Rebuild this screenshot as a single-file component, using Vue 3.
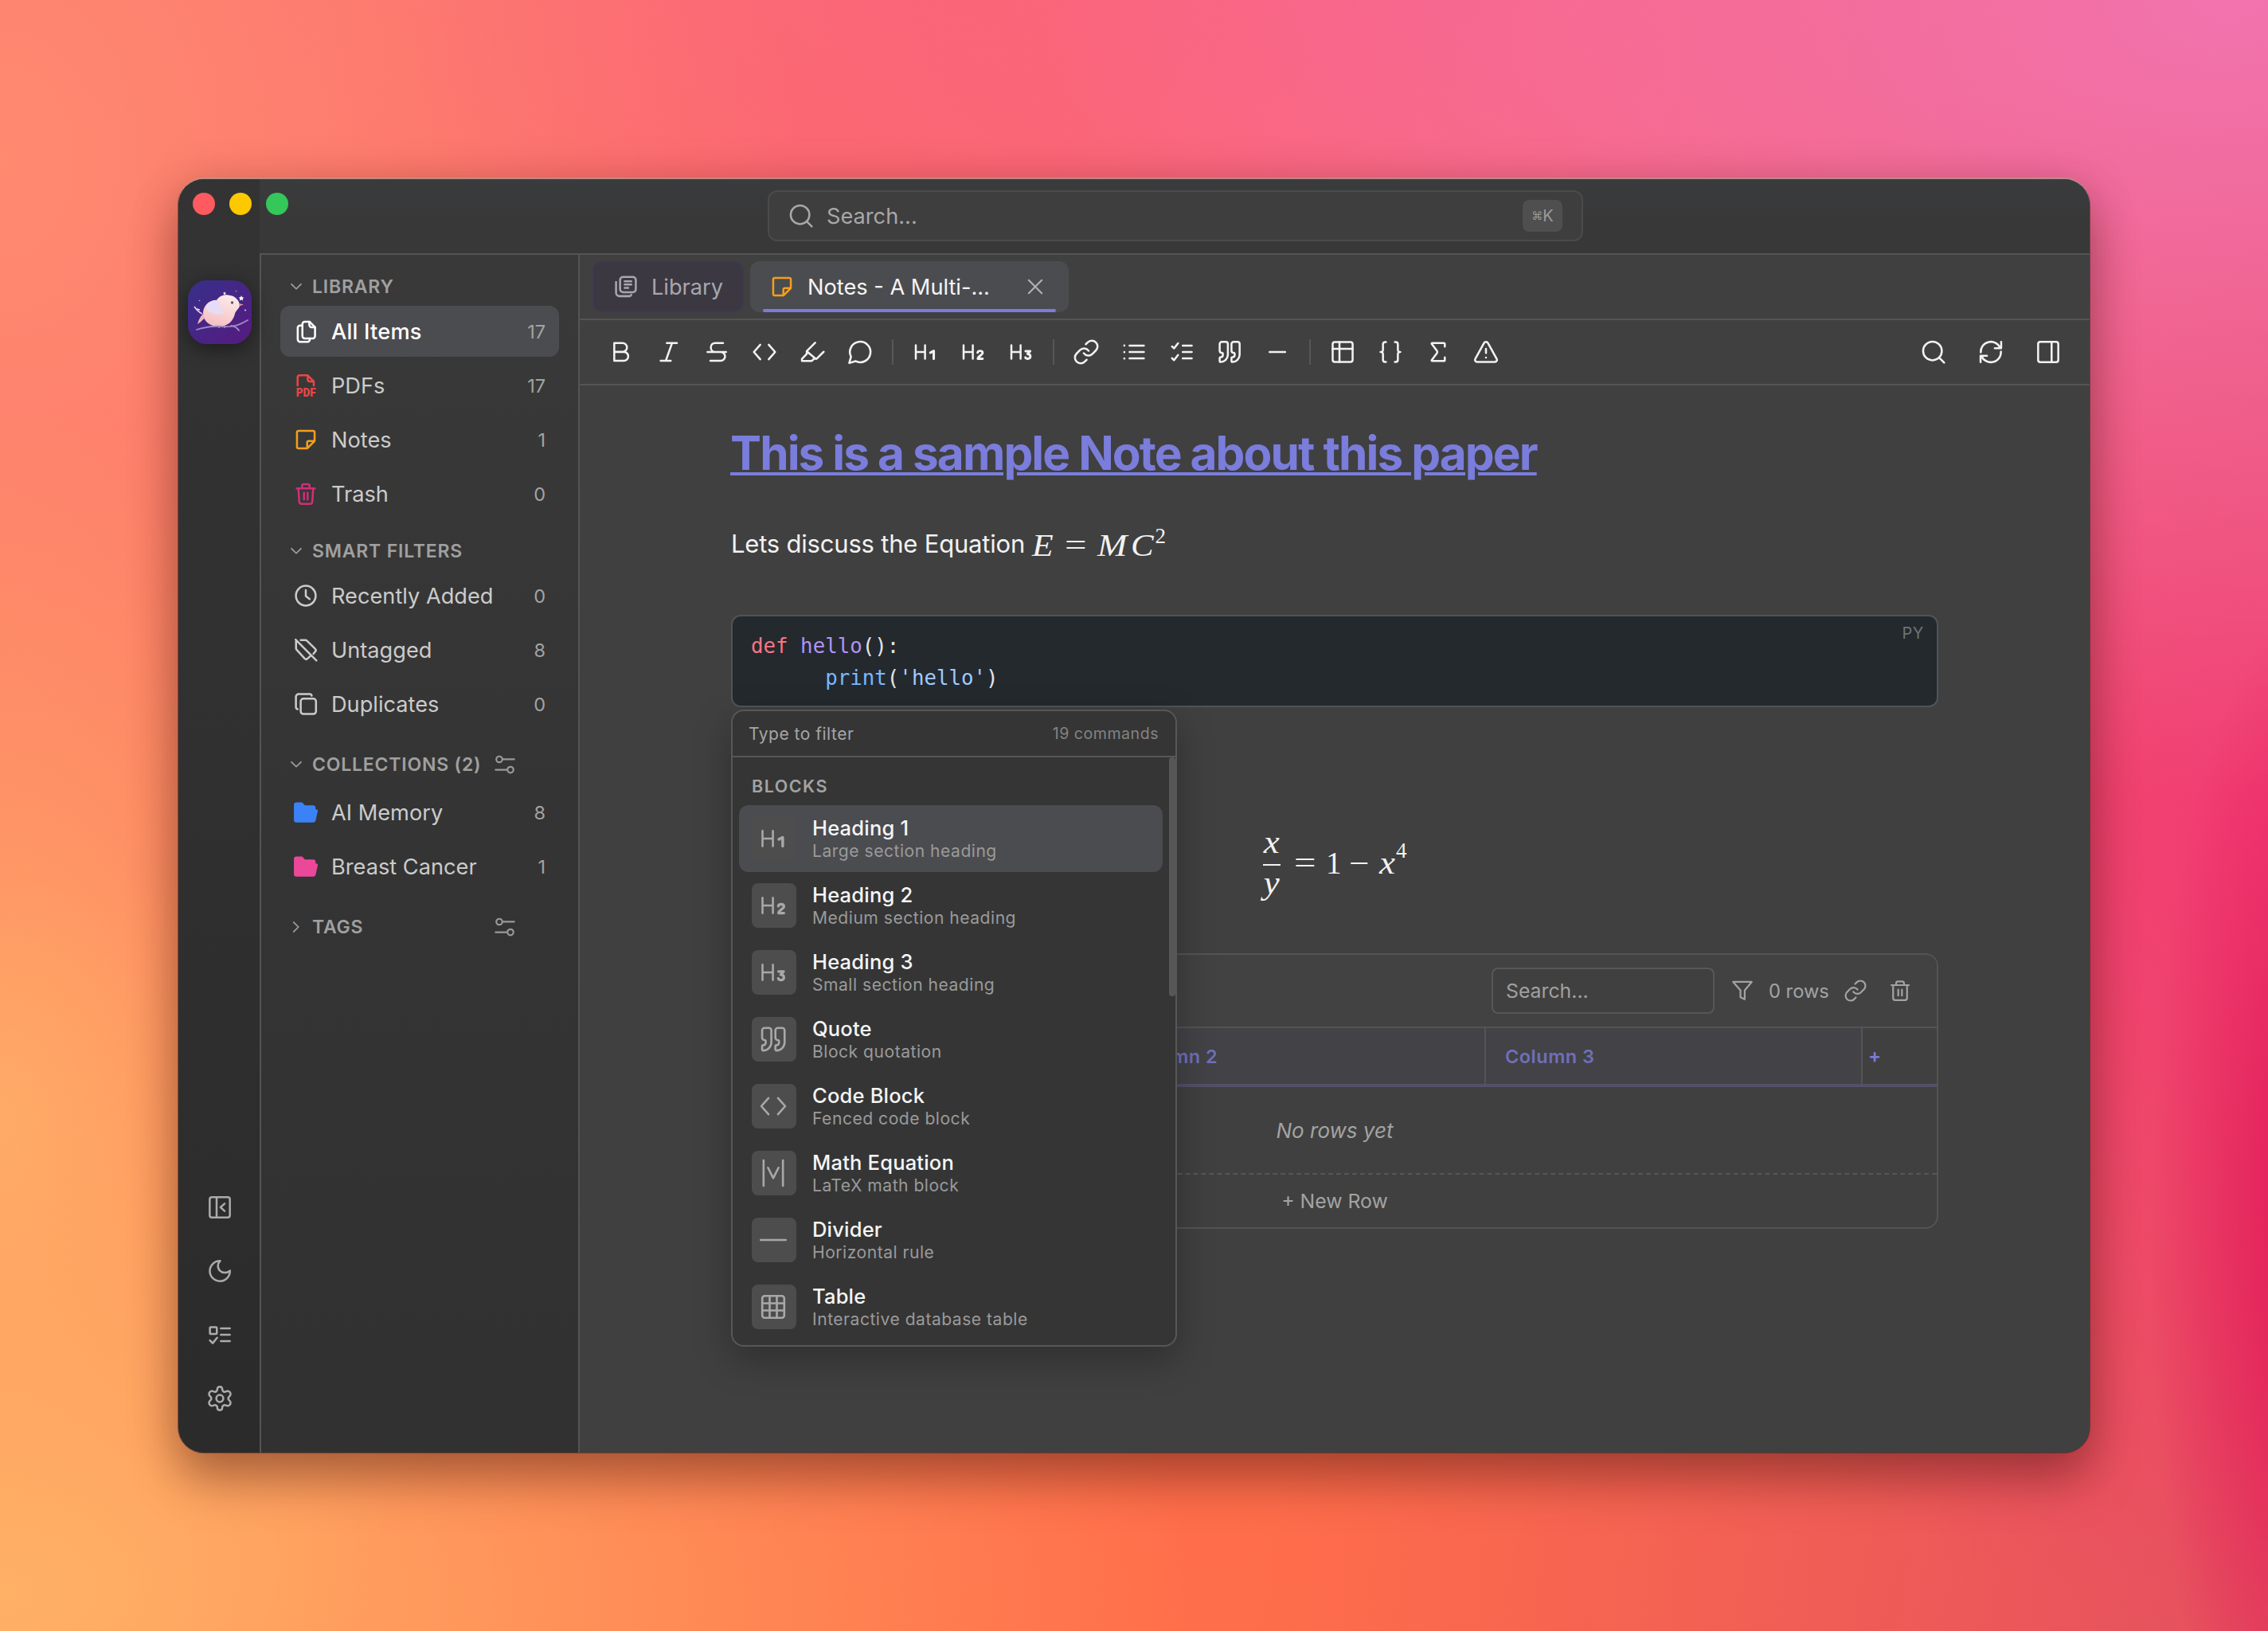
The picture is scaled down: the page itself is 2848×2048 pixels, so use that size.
<template>
  <div class="desktop">
    <div class="window">
      <aside class="rail">
        <div class="lights">
          <span class="light red"></span>
          <span class="light yellow"></span>
          <span class="light green"></span>
        </div>
        <div class="logo">
          <svg viewBox="0 0 80 80">
            <defs>
              <linearGradient id="night" x1="0" y1="0" x2="1" y2="1">
                <stop offset="0" stop-color="#36308a" />
                <stop offset="1" stop-color="#571a80" />
              </linearGradient>
              <linearGradient id="bird" x1="0.7" y1="0" x2="0.3" y2="1">
                <stop offset="0" stop-color="#fbeaea" />
                <stop offset="1" stop-color="#f5bfc0" />
              </linearGradient>
            </defs>
            <rect width="80" height="80" fill="url(#night)" />
            <path d="M8 33q5 7 10 9M11 36l4 1" fill="none" stroke="#e5d6ef" stroke-width="1.6" />
            <path d="M19 42q-5 5-7 13 6-4 9-8z" fill="#f0b6bd" />
            <path d="M19 41C19 31 28 24 36 25c3-5 10-8 17-6 7 1 12 7 12 13-1 4-5 6-6 10-2 9-9 16-20 16-12 0-20-7-20-17z" fill="url(#bird)" />
            <path d="M23 33c3-5 8-9 13-8 5 1 6 6 5 10 2 2 3 4 4 7-6 0-9 2-14-1-5-1-9-4-8-8z" fill="#e6dcf5" />
            <path d="M64 29l6 1.6-6 2z" fill="#e99aa0" />
            <circle cx="55.5" cy="28" r="1.7" fill="#5a5560" />
            <path d="M39 57v3M46 57v3" stroke="#e99aa0" stroke-width="1.2" />
            <path d="M11 62c12-4 20-5 32-4 14 1 22-2 32-8M54 57q7 1 10 6" fill="none" stroke="#a489c4" stroke-width="1.8" stroke-linecap="round" />
            <path d="M67 19l1 2.2 2.4.3-1.7 1.6.4 2.4-2.1-1.2-2.1 1.2.4-2.4-1.7-1.6 2.4-.3z" fill="#fff" />
            <path d="M46 14.3l.7 1.3 1.3.2-1 1 .3 1.4-1.3-.7-1.3.7.3-1.4-1-1 1.3-.2z" fill="#f3e9f8" />
            <circle cx="14.5" cy="25.5" r="0.8" fill="#cbbbe6" />
            <circle cx="72" cy="37.5" r="1" fill="#e2d4f2" />
            <circle cx="60.5" cy="13.5" r="0.7" fill="#cbbbe6" />
          </svg>
        </div>
        <div class="rail-actions">
          <Icon v-for="name in railIcons" :key="name" :name="name" />
        </div>
      </aside>

      <div class="body">
        <header class="titlebar">
          <div class="search">
            <Icon name="search" />
            <span class="search-text">Search...</span>
            <kbd><span class="cmd">⌘</span>K</kbd>
          </div>
        </header>

        <div class="panes">
          <nav class="sidebar">
            <section v-for="group in groups" :key="group.title" class="group">
              <div :class="['group-head', { tall: group.manage }]">
                <Icon :name="group.open ? 'down' : 'right'" class="chevron" />
                <span>{{ group.title }}</span>
                <Icon v-if="group.manage" name="sliders" class="manage" />
              </div>
              <div
                v-for="item in group.items"
                :key="item.label"
                :class="['item', { active: item.active }]"
              >
                <Icon :name="item.icon" :class="item.tone" />
                <span class="label">{{ item.label }}</span>
                <span class="count">{{ item.count }}</span>
              </div>
            </section>
          </nav>

          <main class="main">
            <div class="tabs">
              <div class="tab library">
                <Icon name="library" />
                <span>Library</span>
              </div>
              <div class="tab current">
                <Icon name="note" class="amber" />
                <span class="tab-title">Notes - A Multi-...</span>
                <Icon name="close" class="close" />
              </div>
            </div>

            <div class="toolbar">
              <template v-for="(tool, index) in tools" :key="index">
                <span v-if="tool === '|'" class="divider"></span>
                <button v-else class="tool"><Icon :name="tool" /></button>
              </template>
              <div class="tools-right">
                <button v-for="tool in rightTools" :key="tool" class="tool">
                  <Icon :name="tool" />
                </button>
              </div>
            </div>

            <article class="editor">
              <h1>This is a sample Note about this paper</h1>
              <p class="para">
                Lets discuss the Equation
                <span class="math"><i class="e">E</i><span class="rel">=</span><i class="m">M</i><i class="c">C</i><span class="pow">2</span></span>
              </p>

              <div class="code-wrap">
                <div class="code">
                  <div class="line"><span class="kw">def</span><span class="fn">&nbsp;hello</span><span>():</span></div>
                  <div class="line indent"><span class="call">print</span><span>(</span><span class="str">'hello'</span><span>)</span></div>
                </div>
                <span class="lang">PY</span>

                <div class="menu">
                  <div class="menu-head">
                    <span>Type to filter</span>
                    <span class="total">19 commands</span>
                  </div>
                  <div class="menu-list">
                    <div class="menu-label">BLOCKS</div>
                    <div
                      v-for="(command, index) in commands"
                      :key="command.title"
                      :class="['command', { selected: index === 0 }]"
                    >
                      <span class="tile"><Icon :name="command.icon" /></span>
                      <div class="command-text">
                        <div class="command-title">{{ command.title }}</div>
                        <div class="command-desc">{{ command.desc }}</div>
                      </div>
                    </div>
                    <span class="thumb"></span>
                  </div>
                </div>
              </div>

              <div class="equation">
                <div class="frac">
                  <i>x</i>
                  <span class="bar"></span>
                  <i>y</i>
                </div>
                <span class="eq-sign">=</span>
                <span class="one">1</span>
                <span class="eq-minus">−</span>
                <i class="eq-x">x</i>
                <span class="eq-pow">4</span>
              </div>

              <div class="table">
                <div class="table-bar">
                  <div class="table-search">Search...</div>
                  <Icon name="filter" class="filter" />
                  <span class="rows">0 rows</span>
                  <Icon name="link" class="t-link" />
                  <Icon name="bin" />
                </div>
                <div class="table-head">
                  <div class="th">Column 1</div>
                  <div class="th">Column 2</div>
                  <div class="th">Column 3</div>
                  <div class="add">+</div>
                </div>
                <div class="empty">No rows yet</div>
                <div class="new-row">+ New Row</div>
              </div>
            </article>
          </main>
        </div>
      </div>
    </div>
  </div>
</template>

<script setup>
import { h } from 'vue'

const icons = {
  search: '<circle cx="11" cy="11" r="8.8"/><path d="m17.5 17.5 4.5 4.5"/>',
  panelLeft: '<rect x="2.5" y="2.5" width="19" height="19" rx="2"/><path d="M9 2.5v19M16.5 8.5 12.7 12l3.8 3.5"/>',
  moon: '<path d="M12.4 2.5a9.5 9.5 0 1 0 9.2 9.2c-2.6 2.4-6.9 2.6-9.5 0-2.6-2.6-2.3-6.9.3-9.2z"/>',
  tasks: '<rect x="2.7" y="4.8" width="6.5" height="6.5" rx="0.8"/><path d="M13 6h8.500M13 12h8.500M13 18h8.500M2.700 17.300l2.600 2.700 4.200-5.200"/>',
  gear: '<path d="M9.671 3.136a2.340 2.340 0 0 1 4.659 0 2.340 2.340 0 0 0 3.319 2.415 2.340 2.340 0 0 1 3.330 4.533 2.340 2.340 0 0 0 0 3.831 2.340 2.340 0 0 1-3.330 4.533 2.340 2.340 0 0 0-3.319 2.415 2.340 2.340 0 0 1-4.659 0 2.340 2.340 0 0 0-3.320-2.415 2.340 2.340 0 0 1-3.330-4.533 2.340 2.340 0 0 0 0-3.831A2.340 2.340 0 0 1 6.350 5.551a2.340 2.340 0 0 0 3.319-2.415"/><circle cx="12" cy="12" r="3.300"/>',
  down: '<path d="m5.500 8.500 6.500 6.500 6.500-6.500"/>',
  right: '<path d="m8.500 5.500 6.500 6.500-6.500 6.500"/>',
  sliders: '<circle cx="6" cy="6.400" r="3.200"/><path d="M9.500 6.400H22M2 17.600h12.500"/><circle cx="18" cy="17.600" r="3.200"/>',
  files: '<path d="M11 3h4.500l5.200 5.200v8.300a2.200 2.200 0 0 1-2.200 2.200H11a2.200 2.200 0 0 1-2.200-2.200V5.200A2.200 2.200 0 0 1 11 3z"/><path d="M15.300 3v3a2.200 2.200 0 0 0 2.200 2.200h3.200M8.500 6.500H6.600a2.200 2.200 0 0 0-2.200 2.200v11A2.200 2.200 0 0 0 6.600 21.900h7a2.200 2.200 0 0 0 2.200-2.200v-1"/>',
  pdf: '<path d="M4.300 12V4.500a2 2 0 0 1 2-2h7.500l5.700 5.700V12M13.800 2.700v3.500a2 2 0 0 0 2 2h3.500"/><text x="2.800" y="22.600" textLength="18.600" lengthAdjust="spacingAndGlyphs" font-family="Roboto" font-weight="900" font-size="11" fill="currentColor" stroke="none">PDF</text>',
  note: '<path d="M13.300 20.300H5.200a1.500 1.500 0 0 1-1.500-1.500V5.200a1.500 1.500 0 0 1 1.500-1.500h13.600a1.500 1.500 0 0 1 1.500 1.500v8.100zM13.300 20.300v-5.500a1.500 1.500 0 0 1 1.500-1.500h5.500"/>',
  trash: '<path d="M3.500 7h17M8.500 7V4.300A1.300 1.300 0 0 1 9.800 3h4.400a1.300 1.300 0 0 1 1.300 1.300V7M5 7l.9 12.600a2 2 0 0 0 2 1.900h8.200a2 2 0 0 0 2-1.900L19 7M10.300 11v6.500M13.700 11v6.500"/>',
  clock: '<circle cx="12" cy="12" r="9.300"/><path d="M12 6.800v5.600l3.600 2.800"/>',
  untag: '<path d="M7.200 2.800h4.500a2 2 0 0 1 1.400.6l7.700 7.500a2 2 0 0 1 0 2.800l-1.600 2M2.800 4v6.500a2 2 0 0 0 .6 1.400l7.500 8.300a2 2 0 0 0 2.800 0l2.700-2.500M2.400 2.400 22 22"/>',
  copies: '<rect x="7.200" y="7" width="14.400" height="14.400" rx="2.500"/><path d="M4.300 16.800a2 2 0 0 1-1.600-2V5.200a2.500 2.500 0 0 1 2.500-2.500h10.400a2 2 0 0 1 2 1.500"/>',
  folder: '<path fill="currentColor" stroke="none" d="M.8 5a2.400 2.400 0 0 1 2.400-2.400h5.400l2.600 2.800h7.700a2.300 2.300 0 0 1 2.300 2.300v1.500h.7a1.400 1.400 0 0 1 1.300 1.800l-1.900 8.700a2.400 2.400 0 0 1-2.300 1.800H3.200A2.400 2.400 0 0 1 .8 19.100z"/>',
  library: '<rect x="6.500" y="2.800" width="14.800" height="14.400" rx="2.800"/><path d="M10.800 6.900h6.300M10.800 10h6.300M10.800 13.100h3.400M2.700 7.500v10.200a3.200 3.200 0 0 0 3.200 3.200h9.300a2 2 0 0 0 1.900-1.300"/>',
  close: '<path d="M5 5l14 14M19 5l-14 14"/>',
  bold: '<path d="M5.500 3.500h7.800a4.200 4.200 0 0 1 0 8.400H5.500zM5.500 11.900h9a4.200 4.200 0 0 1 0 8.400h-9z"/>',
  italic: '<path d="M10 3.500h9.500M4.200 20.300h9.500M15 3.500 9 20.300"/>',
  strike: '<path d="M18 3.500h-7.500a4 4 0 0 0-4 4v.5a4 4 0 0 0 4 4h5.200a4.150 4.150 0 0 1 0 8.300H6M3.300 12h17.500"/>',
  code: '<path d="M8 5.200 2 12l6 6.800M16 5.200 22 12l-6 6.800"/>',
  marker: '<path d="M14.700 3.300 6.800 11.200v2.500L2.300 18.500v1.900h9.300l2-2h2.400l6.700-6.600M6.900 11.400l8.300 7"/>',
  comment: '<path d="M7.700 20.600A9.700 9.700 0 1 0 3.500 16.400L1.800 22.400Z"/>',
  h1: '<path d="M3 5.600v12.800M11.700 5.600v12.800M3 12h8.700"/><path stroke-width="2.300" d="m16.700 12.600 3.200-1.600v7.400"/>',
  h2: '<path d="M3 5.600v12.800M11.700 5.600v12.800M3 12h8.700"/><path stroke-width="2.200" d="M16.200 12.600c.4-2.200 4.700-2.200 4.700.3 0 2-4.500 3-4.500 5.500h4.500"/>',
  h3: '<path d="M3 5.600v12.800M11.700 5.600v12.800M3 12h8.700"/><path stroke-width="2.200" d="M16.400 11.200h4.300l-2.500 2.700c3.500 0 3.600 4.500.3 4.500-1.200 0-2-.5-2.300-1.300"/>',
  link: '<path d="M9.700 13.100a5.400 5.400 0 0 0 8.200.6l3.200-3.200a5.400 5.400 0 0 0-7.700-7.600l-1.800 1.800M14.300 10.900a5.400 5.400 0 0 0-8.200-.6l-3.200 3.200a5.400 5.400 0 0 0 7.700 7.600l1.800-1.800"/>',
  list: '<path d="M2.900 5.900V6M2.900 12v.1M2.900 18v.1M7.800 6h13.500M7.800 12h13.500M7.800 18h13.500"/>',
  checks: '<path d="M2.800 6.800l1.900 1.700 3.800-4.700M2.800 17.800l1.900 1.900 3.800-4.900M12.900 6h8.500M12.900 12h8.500M12.900 18h8.500"/>',
  quote: '<path d="M15.800 2.500a2 2 0 0 0-2 2v6.200a2 2 0 0 0 2 2 1 1 0 0 1 1 1v1.200a2 2 0 0 1-2 2 1 1 0 0 0-1 1v2.500a1 1 0 0 0 1 1 6.800 6.800 0 0 0 6.700-6.700V4.500a2 2 0 0 0-2-2zM4.700 2.500a2 2 0 0 0-2 2v6.200a2 2 0 0 0 2 2 1 1 0 0 1 1 1v1.200a2 2 0 0 1-2 2 1 1 0 0 0-1 1v2.500a1 1 0 0 0 1 1 6.800 6.800 0 0 0 6.700-6.700V4.500a2 2 0 0 0-2-2z"/>',
  minus: '<path d="M4.700 12h14.700"/>',
  table: '<rect x="2.600" y="2.600" width="18.800" height="18.800" rx="2"/><path d="M2.600 9h18.800M9 2.600v18.800"/>',
  braces: '<path d="M7.800 2.600H7a2 2 0 0 0-2 2v5.200a2 2 0 0 1-2.300 2.200A2 2 0 0 1 5 14.200v5.200a2 2 0 0 0 2 2h.8M16.200 2.600h.8a2 2 0 0 1 2 2v5.200a2 2 0 0 0 2.300 2.200 2 2 0 0 0-2.300 2.200v5.200a2 2 0 0 1-2 2h-.8"/>',
  sigma: '<path d="M18.200 7V4.500a1 1 0 0 0-1-1H6.300a.5.500 0 0 0-.4.800l4.900 6.500a2 2 0 0 1 0 2.400l-4.900 6.500a.5.500 0 0 0 .4.800h10.900a1 1 0 0 0 1-1V17"/>',
  warn: '<path d="m22 18.300-8.200-14.800a2 2 0 0 0-3.600 0L2 18.300a2 2 0 0 0 1.700 3.100h16.600a2 2 0 0 0 1.700-3.100M12 9v4M12 17.200v.1"/>',
  refresh: '<path d="M2.500 12.300a9.500 9.500 0 0 1 18.300-4M21.700 2.500v6h-6M21.500 11.700a9.500 9.500 0 0 1-18.300 4M2.300 21.500v-6h6"/>',
  panelRight: '<rect x="2.500" y="2.500" width="19" height="19" rx="2"/><path d="M15.200 2.500v19"/>',
  matrix: '<path d="M3.900 1.300v21.400M20.100 1.300v21.400M7.600 7.500 12 16.300l4.400-8.800"/>',
  rule: '<path d="M1.500 12h21"/>',
  grid: '<rect x="2.800" y="2.800" width="18.400" height="18.400" rx="2"/><path d="M2.800 9h18.400M2.800 15h18.400M9 2.800v18.400M15 2.800v18.400"/>',
  filter: '<path d="M2 2.500h20l-7.500 9v9.800l-4.600-2.300v-7.500z"/>',
  bin: '<path d="M2.500 6h19M7.800 6V4a2 2 0 0 1 2-2h4.400a2 2 0 0 1 2 2v2M4.500 6v14a2.200 2.200 0 0 0 2.200 2.200h10.600a2.200 2.200 0 0 0 2.200-2.200V6M10 10.800v6.500M14 10.800v6.500"/>'
}

const Icon = (props) =>
  h('svg', { class: 'icon', viewBox: '0 0 24 24', innerHTML: icons[props.name] })
Icon.props = ['name']

const railIcons = ['panelLeft', 'moon', 'tasks', 'gear']

const groups = [
  {
    title: 'LIBRARY',
    open: true,
    items: [
      { icon: 'files', label: 'All Items', count: 17, active: true },
      { icon: 'pdf', label: 'PDFs', count: 17, tone: 'red-tone' },
      { icon: 'note', label: 'Notes', count: 1, tone: 'amber' },
      { icon: 'trash', label: 'Trash', count: 0, tone: 'magenta' }
    ]
  },
  {
    title: 'SMART FILTERS',
    open: true,
    items: [
      { icon: 'clock', label: 'Recently Added', count: 0 },
      { icon: 'untag', label: 'Untagged', count: 8 },
      { icon: 'copies', label: 'Duplicates', count: 0 }
    ]
  },
  {
    title: 'COLLECTIONS (2)',
    open: true,
    manage: true,
    items: [
      { icon: 'folder', label: 'AI Memory', count: 8, tone: 'blue' },
      { icon: 'folder', label: 'Breast Cancer', count: 1, tone: 'pink' }
    ]
  },
  { title: 'TAGS', open: false, manage: true, items: [] }
]

const tools = [
  'bold', 'italic', 'strike', 'code', 'marker', 'comment', '|',
  'h1', 'h2', 'h3', '|',
  'link', 'list', 'checks', 'quote', 'minus', '|',
  'table', 'braces', 'sigma', 'warn'
]
const rightTools = ['search', 'refresh', 'panelRight']

const commands = [
  { icon: 'h1', title: 'Heading 1', desc: 'Large section heading' },
  { icon: 'h2', title: 'Heading 2', desc: 'Medium section heading' },
  { icon: 'h3', title: 'Heading 3', desc: 'Small section heading' },
  { icon: 'quote', title: 'Quote', desc: 'Block quotation' },
  { icon: 'code', title: 'Code Block', desc: 'Fenced code block' },
  { icon: 'matrix', title: 'Math Equation', desc: 'LaTeX math block' },
  { icon: 'rule', title: 'Divider', desc: 'Horizontal rule' },
  { icon: 'grid', title: 'Table', desc: 'Interactive database table' }
]
</script>

<style>
html,
body {
  margin: 0;
  overflow: hidden;
}
</style>

<style scoped>
.desktop {
  width: 2848px;
  height: 2048px;
  box-sizing: border-box;
  padding: 225px 224px 0;
  overflow: hidden;
  font-family: Inter, 'Noto Sans', sans-serif;
  background:
    radial-gradient(ellipse 200px 800px at 2900px 1560px, rgba(224, 20, 86, 0.9) 0%, rgba(224, 20, 86, 0) 100%),
    radial-gradient(ellipse 1500px 1000px at 2800px 0, #f273ae 0%, rgba(242, 115, 174, 0) 100%),
    radial-gradient(ellipse 900px 1000px at 2848px 1050px, #f23c74 0%, rgba(242, 60, 116, 0) 100%),
    radial-gradient(ellipse 1300px 700px at 1800px 0, rgba(250, 96, 132, 0.8) 0%, rgba(250, 96, 132, 0) 100%),
    radial-gradient(ellipse 1500px 900px at 0 2000px, #ffb166 0%, rgba(255, 177, 102, 0) 100%),
    radial-gradient(ellipse 600px 900px at 0 1400px, rgba(255, 174, 106, 0.9) 0%, rgba(255, 174, 106, 0) 100%),
    radial-gradient(ellipse 1000px 1300px at 0 200px, #ff8a70 0%, rgba(255, 138, 112, 0) 100%),
    linear-gradient(100deg, rgba(232, 80, 92, 0) 60%, #e4505f 100%),
    linear-gradient(180deg, #fb6b70 0%, #ff6c4c 75%, #ff6e4a 100%);
}

.window {
  width: 2400px;
  height: 1599px;
  display: flex;
  border-radius: 32px;
  overflow: hidden;
  background: #404040;
  box-shadow:
    0 -2px 0 rgba(190, 160, 150, 0.7),
    0 0 0 1px rgba(60, 30, 30, 0.5),
    0 36px 60px rgba(60, 15, 10, 0.34),
    0 6px 60px rgba(60, 15, 10, 0.2);
}

.icon {
  width: 32px;
  height: 32px;
  flex: none;
  display: block;
  overflow: visible;
  fill: none;
  stroke: currentColor;
  stroke-width: 1.9;
  stroke-linecap: round;
  stroke-linejoin: round;
}

/* left rail */
.rail {
  width: 102px;
  flex: none;
  box-sizing: border-box;
  padding-left: 2px;
  position: relative;
  display: flex;
  flex-direction: column;
  align-items: center;
  background: linear-gradient(180deg, #333334 0%, #303030 45%, #2b2b2b 100%);
  color: #ababab;
}

.lights {
  position: absolute;
  left: 18px;
  top: 17px;
  display: flex;
  gap: 18px;
  z-index: 2;
}

.light {
  width: 28px;
  height: 28px;
  border-radius: 50%;
}

.light.red {
  background: #ff5a5f;
}

.light.yellow {
  background: #fcc800;
}

.light.green {
  background: #34c759;
}

.logo {
  width: 80px;
  height: 80px;
  margin-top: 127px;
  border-radius: 24px;
  overflow: hidden;
  box-shadow: 0 6px 24px rgba(0, 0, 0, 0.45);
}

.logo svg {
  display: block;
}

.rail-actions {
  margin-top: auto;
  padding-bottom: 52px;
  display: flex;
  flex-direction: column;
  gap: 48px;
}

/* title bar */
.body {
  flex: 1;
  min-width: 0;
  display: flex;
  flex-direction: column;
}

.titlebar {
  height: 93px;
  flex: none;
  padding-left: 2px;
  display: flex;
  align-items: center;
  justify-content: center;
  background: linear-gradient(180deg, #3a3b3d 0%, #383838 60%);
  border-bottom: 2px solid #545454;
}

.search {
  width: 1024px;
  height: 64px;
  box-sizing: border-box;
  margin-top: -1px;
  padding: 0 24px;
  display: flex;
  align-items: center;
  border: 2px solid #4b4b4b;
  border-radius: 12px;
  background: #3e3e3e;
  color: #a8a8a8;
}

.search-text {
  margin-left: 16px;
  flex: 1;
  font-size: 27.2px;
}

kbd {
  width: 50px;
  height: 40px;
  display: flex;
  align-items: center;
  justify-content: center;
  border-radius: 8px;
  background: #4f4f4f;
  color: #9b9b9b;
  font-family: inherit;
  font-size: 20px;
}

.cmd {
  font-family: 'DejaVu Sans', sans-serif;
  font-size: 14px;
}

.panes {
  flex: 1;
  min-height: 0;
  display: flex;
}

/* sidebar */
.sidebar {
  width: 350px;
  flex: none;
  padding: 16px 24px 0;
  border-left: 2px solid #545454;
  border-right: 2px solid #545454;
  background: linear-gradient(180deg, #393939 0%, #343434 50%, #313131 100%);
}

.group {
  display: flex;
  flex-direction: column;
  gap: 4px;
  margin-bottom: 16px;
}

.group-head {
  height: 48px;
  margin-bottom: -4px;
  padding: 0 56px 0 9px;
  display: flex;
  align-items: center;
  color: #a0a0a0;
  font-size: 23px;
  font-weight: 600;
  letter-spacing: 0.8px;
}

.group-head.tall {
  height: 56px;
}

.chevron {
  width: 22px;
  height: 22px;
  margin-right: 9px;
}

.manage {
  width: 28px;
  height: 28px;
  margin-left: auto;
  margin-right: -2px;
  color: #999;
}

.item {
  height: 64px;
  padding: 0 17px 0 16px;
  display: flex;
  align-items: center;
  border-radius: 12px;
  color: #cbcbcb;
  font-size: 27.2px;
}

.item.active {
  background: #4b4c50;
  color: #fff;
}

.active .label {
  font-weight: 500;
  letter-spacing: 0.2px;
}

.label {
  margin-left: 16px;
  flex: 1;
}

.count {
  font-size: 23.5px;
  color: #a3a3a3;
}

.red-tone {
  color: #ef4444;
}

.amber {
  color: #f59e1b;
}

.magenta {
  color: #d12e78;
}

.blue {
  color: #3b82f6;
}

.pink {
  color: #ec4899;
}

/* tabs */
.main {
  flex: 1;
  min-width: 0;
  background: #404040;
}

.tabs {
  height: 80px;
  box-sizing: border-box;
  padding: 8px 16px;
  display: flex;
  gap: 8px;
}

.tab {
  height: 64px;
  box-sizing: border-box;
  display: flex;
  align-items: center;
  border-radius: 12px;
  font-size: 27.2px;
}

.library {
  width: 190px;
  padding-left: 24px;
  border: 2px solid #3d3850;
  background: #3b3842;
  color: #a8a6ae;
}

.library .icon {
  margin-right: 16px;
}

.current {
  position: relative;
  width: 400px;
  padding: 0 28px 0 24px;
  background: #4b4c50;
  color: #f5f5f5;
}

.current::after {
  content: '';
  position: absolute;
  left: 16px;
  right: 16px;
  bottom: 0;
  height: 4px;
  border-radius: 2px;
  background: #7a7ddb;
}

.tab-title {
  margin-left: 16px;
  flex: 1;
}

.close {
  width: 28px;
  height: 28px;
  color: #b0b0b0;
}

/* toolbar */
.toolbar {
  height: 80px;
  padding: 0 24px;
  display: flex;
  align-items: center;
  gap: 4px;
  border-top: 2px solid #545454;
  border-bottom: 2px solid #545454;
}

.tool {
  width: 56px;
  height: 56px;
  padding: 0;
  display: flex;
  align-items: center;
  justify-content: center;
  border: none;
  background: none;
  color: #f2f2f2;
}

.divider {
  width: 2px;
  height: 32px;
  margin: 0 8px;
  background: #575757;
}

.tools-right {
  margin-left: auto;
  display: flex;
  gap: 16px;
}

/* editor */
.editor {
  padding: 49px 190px 0;
}

h1 {
  margin: 0 0 0 -1px;
  height: 72px;
  line-height: 72px;
  font-size: 58.5px;
  font-weight: 700;
  letter-spacing: -1.92px;
  color: #7a7ddb;
  text-decoration: underline;
  text-decoration-thickness: 4px;
  text-underline-offset: 3px;
  white-space: nowrap;
}

.para {
  margin: 50px 0 61px;
  height: 56px;
  line-height: 56px;
  font-size: 31px;
  letter-spacing: -0.2px;
  color: #f2f2f2;
  white-space: nowrap;
}

.math {
  position: relative;
  top: 4px;
  font-family: 'Liberation Serif', serif;
  font-size: 39px;
  line-height: 0;
  letter-spacing: 0;
}

.math i,
.math span {
  display: inline-block;
  transform-origin: 0 50%;
}

.e {
  width: 41px;
  transform: scaleX(1.12);
}

.rel {
  width: 41px;
  transform: scaleX(1.25);
}

.m {
  width: 42px;
  transform: scaleX(1.15);
}

.c {
  width: 31px;
  transform: scaleX(1.1);
}

.math .pow {
  position: relative;
  top: -16px;
  font-size: 27px;
}

.code-wrap {
  position: relative;
}

.code {
  height: 116px;
  box-sizing: border-box;
  padding: 17px 24px 15px 23px;
  border: 2px solid #505457;
  border-radius: 12px;
  background: #24292e;
  color: #e1e4e8;
  font-family: 'DejaVu Sans Mono', monospace;
  font-size: 25.8px;
}

.line {
  display: flex;
  line-height: 40px;
}

.indent {
  padding-left: 6ch;
}

.kw {
  color: #f97583;
}

.fn {
  color: #b392f0;
}

.call {
  color: #79b8ff;
}

.str {
  color: #9ecbff;
}

.lang {
  position: absolute;
  top: 10px;
  right: 18px;
  font-size: 20px;
  letter-spacing: 0.6px;
  line-height: 26px;
  color: #6f7376;
}

/* slash command menu */
.menu {
  position: absolute;
  left: 0;
  top: 119px;
  z-index: 5;
  width: 560px;
  height: 800px;
  box-sizing: border-box;
  border: 2px solid #575757;
  border-radius: 16px;
  background: #353535;
  box-shadow: 0 16px 48px rgba(0, 0, 0, 0.28);
  overflow: hidden;
  letter-spacing: 0.5px;
}

.menu-head {
  height: 56px;
  padding: 0 21px 0 20px;
  display: flex;
  align-items: center;
  justify-content: space-between;
  border-bottom: 2px solid #575757;
  color: #a6a6a6;
  font-size: 21px;
}

.total {
  color: #838383;
  font-size: 19.6px;
}

.menu-list {
  position: relative;
  padding: 12px 16px 0 8px;
}

.menu-label {
  height: 48px;
  padding-left: 16px;
  line-height: 48px;
  color: #a3a3a3;
  font-size: 21.5px;
  font-weight: 600;
  letter-spacing: 1.5px;
}

.command {
  height: 84px;
  box-sizing: border-box;
  padding: 0 16px;
  display: flex;
  align-items: center;
  gap: 20px;
  border-radius: 12px;
}

.selected {
  background: #4b4c50;
}

.tile {
  width: 56px;
  height: 56px;
  display: flex;
  align-items: center;
  justify-content: center;
  border-radius: 8px;
  background: #4d4d4d;
  color: #a8a8a8;
}

.tile .icon {
  width: 36px;
  height: 36px;
  margin-left: -2px;
  stroke-width: 1.75;
}

.command-title {
  padding-top: 1px;
  line-height: 31px;
  font-size: 25.5px;
  font-weight: 500;
  letter-spacing: 0.2px;
  color: #f5f5f5;
}

.command-desc {
  line-height: 28px;
  font-size: 21.1px;
  color: #9a9a9a;
}

.thumb {
  position: absolute;
  top: 0;
  right: 0;
  width: 8px;
  height: 300px;
  border-radius: 4px;
  background: #575757;
}

/* block equation */
.equation {
  height: 96px;
  margin: 150px 0 63px;
  padding-left: 668px;
  display: flex;
  align-items: center;
  color: #f2f2f2;
  font-family: 'Liberation Serif', serif;
  font-size: 39px;
  line-height: 40px;
}

.frac {
  width: 22px;
  margin-right: 17px;
  display: flex;
  flex-direction: column;
  align-items: center;
}

.frac i {
  height: 46px;
  transform: scaleX(1.15);
}

.bar {
  width: 22px;
  height: 2px;
  background: #f2f2f2;
}

.frac i:first-child {
  line-height: 37px;
}

.frac i:last-child {
  line-height: 44px;
}

.equation > span,
.equation > i {
  padding-bottom: 5px;
}

.eq-sign {
  width: 40px;
  transform: scaleX(1.25);
  transform-origin: 0 50%;
}

.one {
  width: 29px;
}

.eq-minus {
  width: 38px;
  transform: scaleX(1.15);
  transform-origin: 0 50%;
}

.eq-x {
  width: 21px;
  transform: scaleX(1.15);
  transform-origin: 0 50%;
}

.equation > .eq-pow {
  padding-bottom: 37px;
  font-size: 27px;
}

/* database table */
.table {
  height: 346px;
  box-sizing: border-box;
  border: 2px solid #545454;
  border-radius: 16px;
  overflow: hidden;
  color: #a3a3a3;
  font-size: 24.8px;
}

.table-bar {
  height: 90px;
  padding-right: 32px;
  display: flex;
  align-items: center;
  justify-content: flex-end;
  border-bottom: 2px solid #545454;
  background: #424243;
}

.table-bar .icon {
  width: 28px;
  height: 28px;
}

.table-search {
  width: 280px;
  height: 58px;
  box-sizing: border-box;
  padding-left: 16px;
  display: flex;
  align-items: center;
  border: 2px solid #575757;
  border-radius: 8px;
  background: #404040;
  color: #a0a0a0;
}

.filter {
  margin-left: 21px;
}

.rows {
  width: 95px;
  margin-left: 19px;
  font-size: 23.7px;
  white-space: nowrap;
}

.t-link {
  margin-right: 28px;
}

.table-head {
  height: 70px;
  display: flex;
  border-bottom: 4px solid #535068;
}

.th {
  width: 473px;
  box-sizing: border-box;
  padding-left: 24px;
  display: flex;
  align-items: center;
  border-right: 2px solid #545454;
  background: #434246;
  color: #706fb8;
  font-size: 23.5px;
  font-weight: 600;
  letter-spacing: 0.5px;
}

.add {
  padding-left: 7px;
  line-height: 70px;
  color: #7a7ddb;
  font-size: 24px;
  font-weight: 600;
}

.empty {
  height: 108px;
  line-height: 110px;
  text-align: center;
  font-style: italic;
  font-size: 26px;
  border-bottom: 2px dashed #575757;
}

.new-row {
  height: 66px;
  line-height: 66px;
  text-align: center;
}
</style>
